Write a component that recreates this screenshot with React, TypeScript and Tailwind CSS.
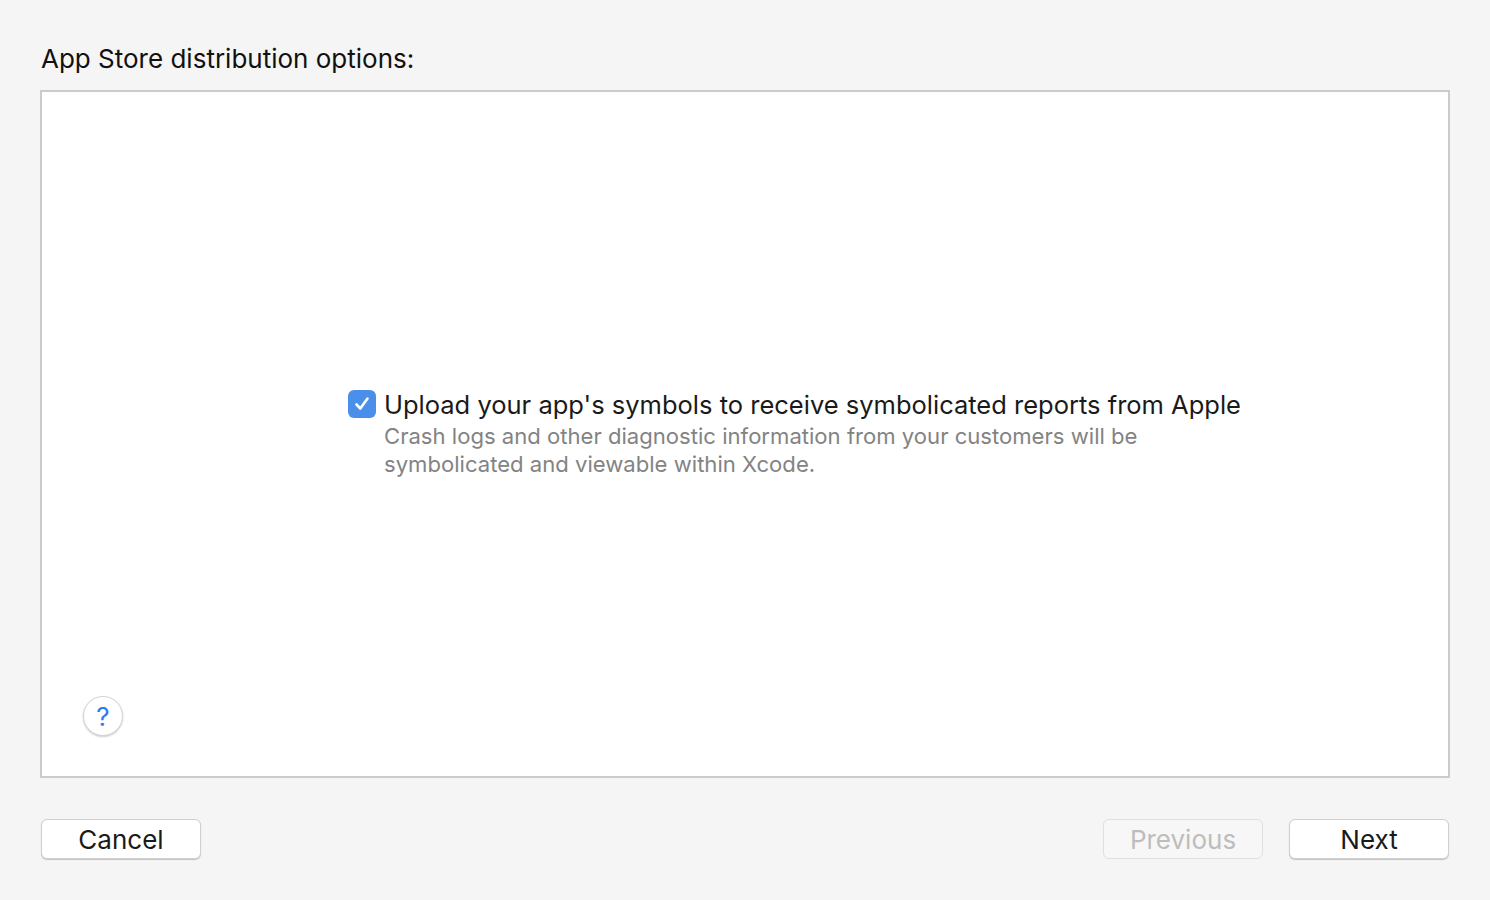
import React from "react";

export default function App() {
  const font = { fontFamily: "Inter, 'Liberation Sans', sans-serif" };
  return (
    <div className="w-[1490px] h-[900px] bg-[#f5f5f5] flex flex-col px-[40px] text-[#222]" style={font}>
      <div className="h-[90px] flex items-end pb-[16px] pl-[1px]">
        <span className="text-[26px] leading-[30px] text-[#111]">App Store distribution options:</span>
      </div>
      <div className="w-[1410px] h-[688px] bg-white border-2 border-[#cbcbcb] flex flex-col">
        <div className="flex-1 flex items-start pt-[298px] pl-[306px]">
          <div className="w-[28px] h-[28px] rounded-[6px] bg-[#4a90ea] flex items-center justify-center">
            <svg width="20" height="20" viewBox="0 0 20 20">
              <path d="M4.5 10.5 L8.3 14.5 L15.5 4.5" stroke="white" strokeWidth="2.6" fill="none" strokeLinecap="round" strokeLinejoin="round" />
            </svg>
          </div>
          <div className="ml-[8px] flex flex-col">
            <div className="text-[25.5px] leading-[30px] text-[#1a1a1a]">Upload your app's symbols to receive symbolicated reports from Apple</div>
            <div className="text-[22.1px] leading-[28px] text-[#838383] mt-[2px]">
              Crash logs and other diagnostic information from your customers will be
              <br />
              symbolicated and viewable within Xcode.
            </div>
          </div>
        </div>
        <div className="pl-[41px] pb-[40px]">
          <div className="w-[40px] h-[40px] rounded-full bg-white border border-[#d4d4d4] shadow-[0_1px_2px_rgba(0,0,0,0.2)] flex items-center justify-center text-[26px] text-[#2f7cf0]">?</div>
        </div>
      </div>
      <div className="flex items-center mt-[41px]">
        <button className="w-[160px] h-[40px] bg-white rounded-[6px] border border-[#cfcfcf] shadow-[0_1px_1px_rgba(0,0,0,0.2)] text-[26px] text-[#1a1a1a] ml-[1px]">Cancel</button>
        <div className="flex-1" />
        <button className="w-[160px] h-[40px] bg-[#f7f7f7] rounded-[6px] border border-[#e0e0e0] text-[26px] text-[#bdbdbd]">Previous</button>
        <button className="w-[160px] h-[40px] bg-white rounded-[6px] border border-[#cfcfcf] shadow-[0_1px_1px_rgba(0,0,0,0.2)] text-[26px] text-[#1a1a1a] ml-[26px] mr-[1px]">Next</button>
      </div>
    </div>
  );
}
